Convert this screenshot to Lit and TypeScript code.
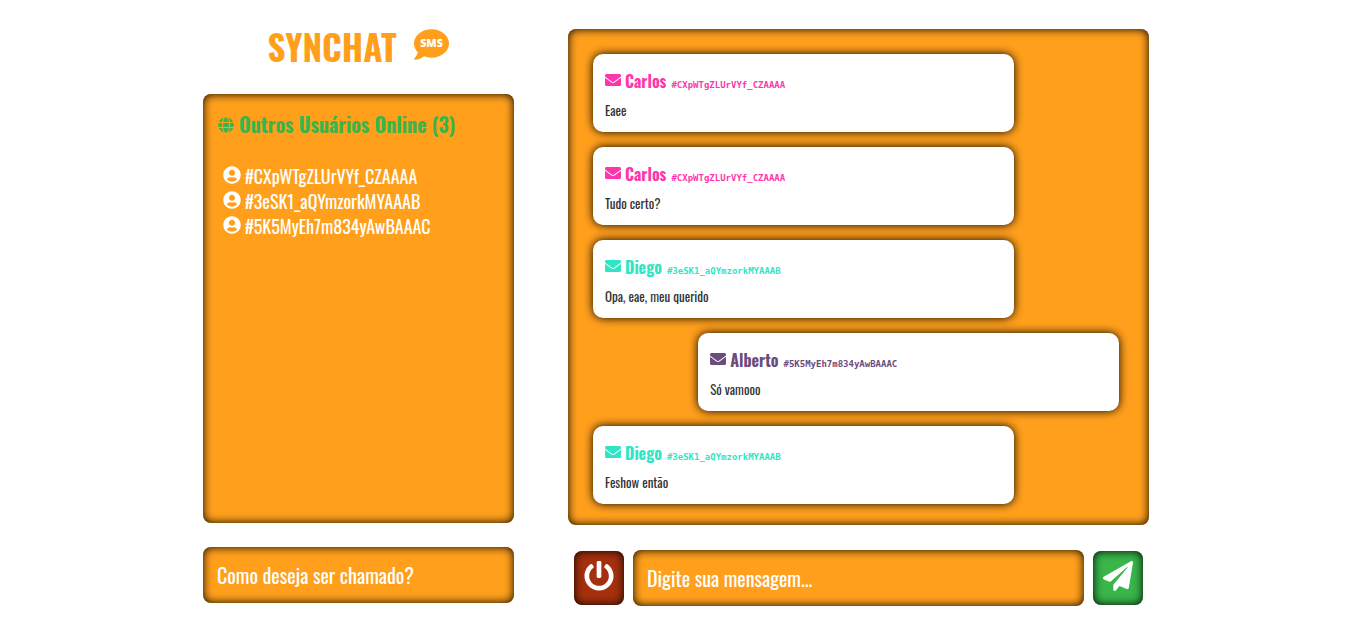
import { LitElement, html, css, svg } from "lit";
import { customElement, property, state } from "lit/decorators.js";
import { classMap } from "lit/directives/class-map.js";

type Glyph = { view: string; path: string };

const GLYPHS: Record<string, Glyph> = {
  bubble: {
    view: "0 32 512 448",
    path: "M256 32C114.6 32 0 125.1 0 240c0 49.6 21.4 95 57 130.7C44.5 421.1 2.7 466 2.2 466.5c-2.2 2.3-2.8 5.7-1.5 8.7 1.3 3 4.1 4.8 7.3 4.8 66.3 0 116-31.8 140.6-51.4 32.7 12.3 69 19.4 107.4 19.4 141.4 0 256-93.1 256-208S397.4 32 256 32z",
  },
  globe: {
    view: "0 0 496 512",
    path: "M336.5 160C322 70.7 287.8 8 248 8s-74 62.7-88.5 152h177zM152 256c0 22.2 1.2 43.5 3.3 64h185.3c2.1-20.5 3.3-41.8 3.3-64s-1.2-43.5-3.3-64H155.3c-2.1 20.5-3.3 41.8-3.3 64zm324.7-96c-28.6-67.9-86.5-120.4-158-141.6 24.4 33.8 41.2 84.7 50 141.6h108zM177.2 18.4C105.8 39.6 47.8 92.1 19.3 160h108c8.7-56.9 25.5-107.8 49.9-141.6zM487.4 192H372.7c2.1 21 3.3 42.5 3.3 64s-1.2 43-3.3 64h114.6c5.5-20.5 8.6-41.8 8.6-64s-3.1-43.5-8.5-64zM120 256c0-21.5 1.2-43 3.3-64H8.6C3.2 212.5 0 233.8 0 256s3.2 43.5 8.6 64h114.6c-2-21-3.2-42.5-3.2-64zm39.5 96c14.5 89.3 48.7 152 88.5 152s74-62.7 88.5-152h-177zm159.3 141.6c71.4-21.2 129.4-73.7 158-141.6h-108c-8.8 56.9-25.6 107.8-50 141.6zM19.3 352c28.6 67.9 86.5 120.4 158 141.6-24.4-33.8-41.2-84.7-50-141.6h-108z",
  },
  user: {
    view: "0 0 496 512",
    path: "M248 8C111 8 0 119 0 256s111 248 248 248 248-111 248-248S385 8 248 8zm0 96c48.6 0 88 39.4 88 88s-39.4 88-88 88-88-39.4-88-88 39.4-88 88-88zm0 344c-58.7 0-111.3-26.6-146.5-68.2 18.8-35.4 55.6-59.8 98.5-59.8 2.4 0 4.8.4 7.1 1.1 13 4.2 26.6 6.9 40.9 6.9 14.3 0 28-2.7 40.9-6.9 2.3-.7 4.7-1.1 7.1-1.1 42.9 0 79.7 24.4 98.5 59.8C359.3 421.4 306.7 448 248 448z",
  },
  envelope: {
    view: "0 0 512 512",
    path: "M502.3 190.8c3.9-3.1 9.7-.2 9.7 4.7V400c0 26.5-21.5 48-48 48H48c-26.5 0-48-21.5-48-48V195.6c0-5 5.7-7.8 9.7-4.7 22.4 17.4 52.1 39.5 154.1 113.6 21.1 15.4 56.7 47.8 92.2 47.6 35.7.3 72-32.8 92.3-47.6 102-74.1 131.6-96.3 154-113.7zM256 320c23.2.4 56.6-29.2 73.4-41.4 132.7-96.3 142.8-104.7 173.4-128.7 5.8-4.5 9.2-11.5 9.2-18.9v-19c0-26.5-21.5-48-48-48H48c-26.5 0-48 21.5-48 48v19c0 7.4 3.4 14.3 9.2 18.9 30.6 23.9 40.7 32.4 173.4 128.7 16.8 12.2 50.2 41.8 73.4 41.4z",
  },
  power: {
    view: "0 0 512 512",
    path: "M400 54.1c63 45 104 118.6 104 201.9 0 136.8-110.8 247.7-247.5 248C120 504.3 8.2 393 8 256.4 7.9 173.1 48.9 99.3 111.8 54.2c11.7-8.3 28-4.8 35 7.7L162.6 90c5.9 10.5 3.1 23.8-6.6 31-41.5 30.8-68 79.6-68 134.9-.1 92.3 74.5 168.1 168 168.1 91.6 0 168.6-74.2 168-169.1-.3-51.8-24.7-101.8-68.1-134-9.7-7.2-12.4-20.5-6.5-30.9l15.8-28.1c7-12.4 23.2-16.1 34.8-7.8zM296 264V24c0-13.3-10.7-24-24-24h-32c-13.3 0-24 10.7-24 24v240c0 13.3 10.7 24 24 24h32c13.3 0 24-10.7 24-24z",
  },
  plane: {
    view: "0 0 512 512",
    path: "M476 3.2L12.5 270.6c-18.1 10.4-15.8 35.6 2.2 43.2L121 358.4l287.3-253.2c5.5-4.9 13.3 2.6 8.6 8.3L176 407v80.5c0 23.6 28.5 32.9 42.5 15.8L282 426l124.6 52.2c14.2 6 30.4-2.9 33-18.2l72-432C515 7.8 493.3-6.8 476 3.2z",
  },
};

@customElement("chat-icon")
class ChatIcon extends LitElement {
  @property() name = "";
  @property() label = "";

  static styles = css`
    :host {
      display: block;
      flex: none;
    }
    .glyph {
      display: block;
      width: 100%;
      height: 100%;
      fill: currentColor;
    }
    .label {
      font: 800 156px "Open Sans", sans-serif;
      fill: #fff;
      text-anchor: middle;
    }
  `;

  render() {
    const glyph = GLYPHS[this.name];
    return html`<svg class="glyph" viewBox=${glyph.view} aria-hidden="true">
      <path d=${glyph.path}></path>
      ${this.label ? svg`<text class="label" x="256" y="298">${this.label}</text>` : ""}
    </svg>`;
  }
}

@customElement("chat-message")
class ChatMessage extends LitElement {
  @property() author = "";
  @property() userId = "";
  @property() text = "";

  static styles = css`
    :host {
      display: block;
      box-sizing: border-box;
      width: 80%;
      padding: 14px 12px 11px;
      border-radius: 10px;
      background: #fff;
      box-shadow: 0 0 10px #000;
    }
    .head {
      display: flex;
      align-items: baseline;
      line-height: 26px;
    }
    .icon {
      width: 16px;
      height: 16px;
      align-self: flex-start;
      margin: 4px 4px 0 0;
    }
    .author {
      font-size: 16px;
      font-weight: 700;
    }
    .id {
      margin-left: 5px;
      font: 700 9px "DejaVu Sans Mono", monospace;
    }
    .text {
      margin: 5px 0 0;
      color: #333;
      font-size: 13px;
      line-height: 22px;
    }
  `;

  render() {
    return html`
      <div class="head">
        <chat-icon class="icon" name="envelope"></chat-icon>
        <span class="author">${this.author}</span>
        <span class="id">${this.userId}</span>
      </div>
      <p class="text">${this.text}</p>
    `;
  }
}

@customElement("app-root")
class AppRoot extends LitElement {
  @state() private users = [
    "#CXpWTgZLUrVYf_CZAAAA",
    "#3eSK1_aQYmzorkMYAAAB",
    "#5K5MyEh7m834yAwBAAAC",
  ];

  @state() private messages = [
    { tone: "pink", author: "Carlos", userId: "#CXpWTgZLUrVYf_CZAAAA", text: "Eaee" },
    { tone: "pink", author: "Carlos", userId: "#CXpWTgZLUrVYf_CZAAAA", text: "Tudo certo?" },
    { tone: "teal", author: "Diego", userId: "#3eSK1_aQYmzorkMYAAAB", text: "Opa, eae, meu querido" },
    { tone: "plum", author: "Alberto", userId: "#5K5MyEh7m834yAwBAAAC", text: "Só vamooo", own: true },
    { tone: "teal", author: "Diego", userId: "#3eSK1_aQYmzorkMYAAAB", text: "Feshow então" },
  ];

  static styles = css`
    :host {
      display: block;
      font-family: "Oswald", "Liberation Sans Narrow", "Roboto Condensed", sans-serif;
    }
    .page {
      display: grid;
      grid-template-columns: 311fr 581fr;
      gap: 54px;
      padding: 29px 217px 24px 203px;
    }
    .side,
    .main {
      display: flex;
      flex-direction: column;
      min-width: 0;
    }
    .side {
      padding-bottom: 3px;
    }
    .brand {
      display: flex;
      justify-content: center;
      gap: 18px;
      height: 65px;
      color: #ff9f1c;
    }
    .title {
      margin: 0;
      font-size: 35px;
      line-height: 35px;
    }
    .logo {
      width: 35px;
      height: 31px;
    }
    .panel,
    .field,
    .action {
      box-sizing: border-box;
      border: 0;
      border-radius: 8px;
      background: #ff9f1c;
      box-shadow: inset 0 0 10px #000;
      color: #fff;
      font-family: inherit;
    }
    .users {
      flex: 1;
      padding: 15px;
    }
    .heading {
      display: flex;
      align-items: center;
      gap: 5px;
      margin: 0 0 24px;
      color: #39b54a;
      font-size: 20px;
      line-height: 31px;
    }
    .globe {
      width: 16px;
      height: 16px;
    }
    .list {
      margin: 0;
      padding: 0 5px;
      list-style: none;
      font-size: 18px;
      line-height: 25px;
    }
    .user {
      display: flex;
      gap: 4px;
    }
    .avatar {
      width: 18px;
      height: 18px;
      margin-top: 2px;
    }
    .field {
      width: 100%;
      min-width: 0;
      height: 56px;
      padding: 0 14px;
      font-size: 20px;
    }
    .field::placeholder {
      color: #fff;
      opacity: 1;
    }
    .name {
      margin-top: 24px;
    }
    .messages {
      display: flex;
      flex-direction: column;
      gap: 15px;
      padding: 25px 30px 21px 25px;
    }
    .own {
      align-self: flex-end;
    }
    .pink {
      color: #ff36ab;
    }
    .teal {
      color: #2ee6c5;
    }
    .plum {
      color: #6b4c7a;
    }
    .composer {
      display: flex;
      align-items: center;
      gap: 9px;
      margin-top: 25px;
      padding: 0 6px;
    }
    .action {
      display: flex;
      justify-content: center;
      flex: none;
      width: 50px;
      height: 54px;
      padding: 10px;
      cursor: pointer;
    }
    .symbol {
      width: 30px;
      height: 30px;
    }
    .leave {
      background: #a5300d;
    }
    .send {
      background: #39b54a;
    }
    @media (max-width: 1100px) {
      .page {
        gap: 32px;
        padding-inline: 24px;
      }
    }
  `;

  render() {
    return html`
      <div class="page">
        <aside class="side">
          <header class="brand">
            <h1 class="title">SYNCHAT</h1>
            <chat-icon class="logo" name="bubble" label="SMS"></chat-icon>
          </header>
          <section class="panel users">
            <h2 class="heading">
              <chat-icon class="globe" name="globe"></chat-icon>
              Outros Usuários Online (${this.users.length})
            </h2>
            <ul class="list">
              ${this.users.map(
                (id) => html`<li class="user">
                  <chat-icon class="avatar" name="user"></chat-icon>
                  <span>${id}</span>
                </li>`
              )}
            </ul>
          </section>
          <input class="field name" type="text" aria-label="Como deseja ser chamado?" placeholder="Como deseja ser chamado?" />
        </aside>
        <main class="main">
          <section class="panel messages">
            ${this.messages.map(
              (m) => html`<chat-message
                class=${classMap({ [m.tone]: true, own: !!m.own })}
                .author=${m.author}
                .userId=${m.userId}
                .text=${m.text}
              ></chat-message>`
            )}
          </section>
          <form class="composer" @submit=${(e: Event) => e.preventDefault()}>
            <button class="action leave" type="button" aria-label="Sair">
              <chat-icon class="symbol" name="power"></chat-icon>
            </button>
            <input class="field" type="text" aria-label="Digite sua mensagem" placeholder="Digite sua mensagem..." />
            <button class="action send" type="submit" aria-label="Enviar">
              <chat-icon class="symbol" name="plane"></chat-icon>
            </button>
          </form>
        </main>
      </div>
    `;
  }
}
